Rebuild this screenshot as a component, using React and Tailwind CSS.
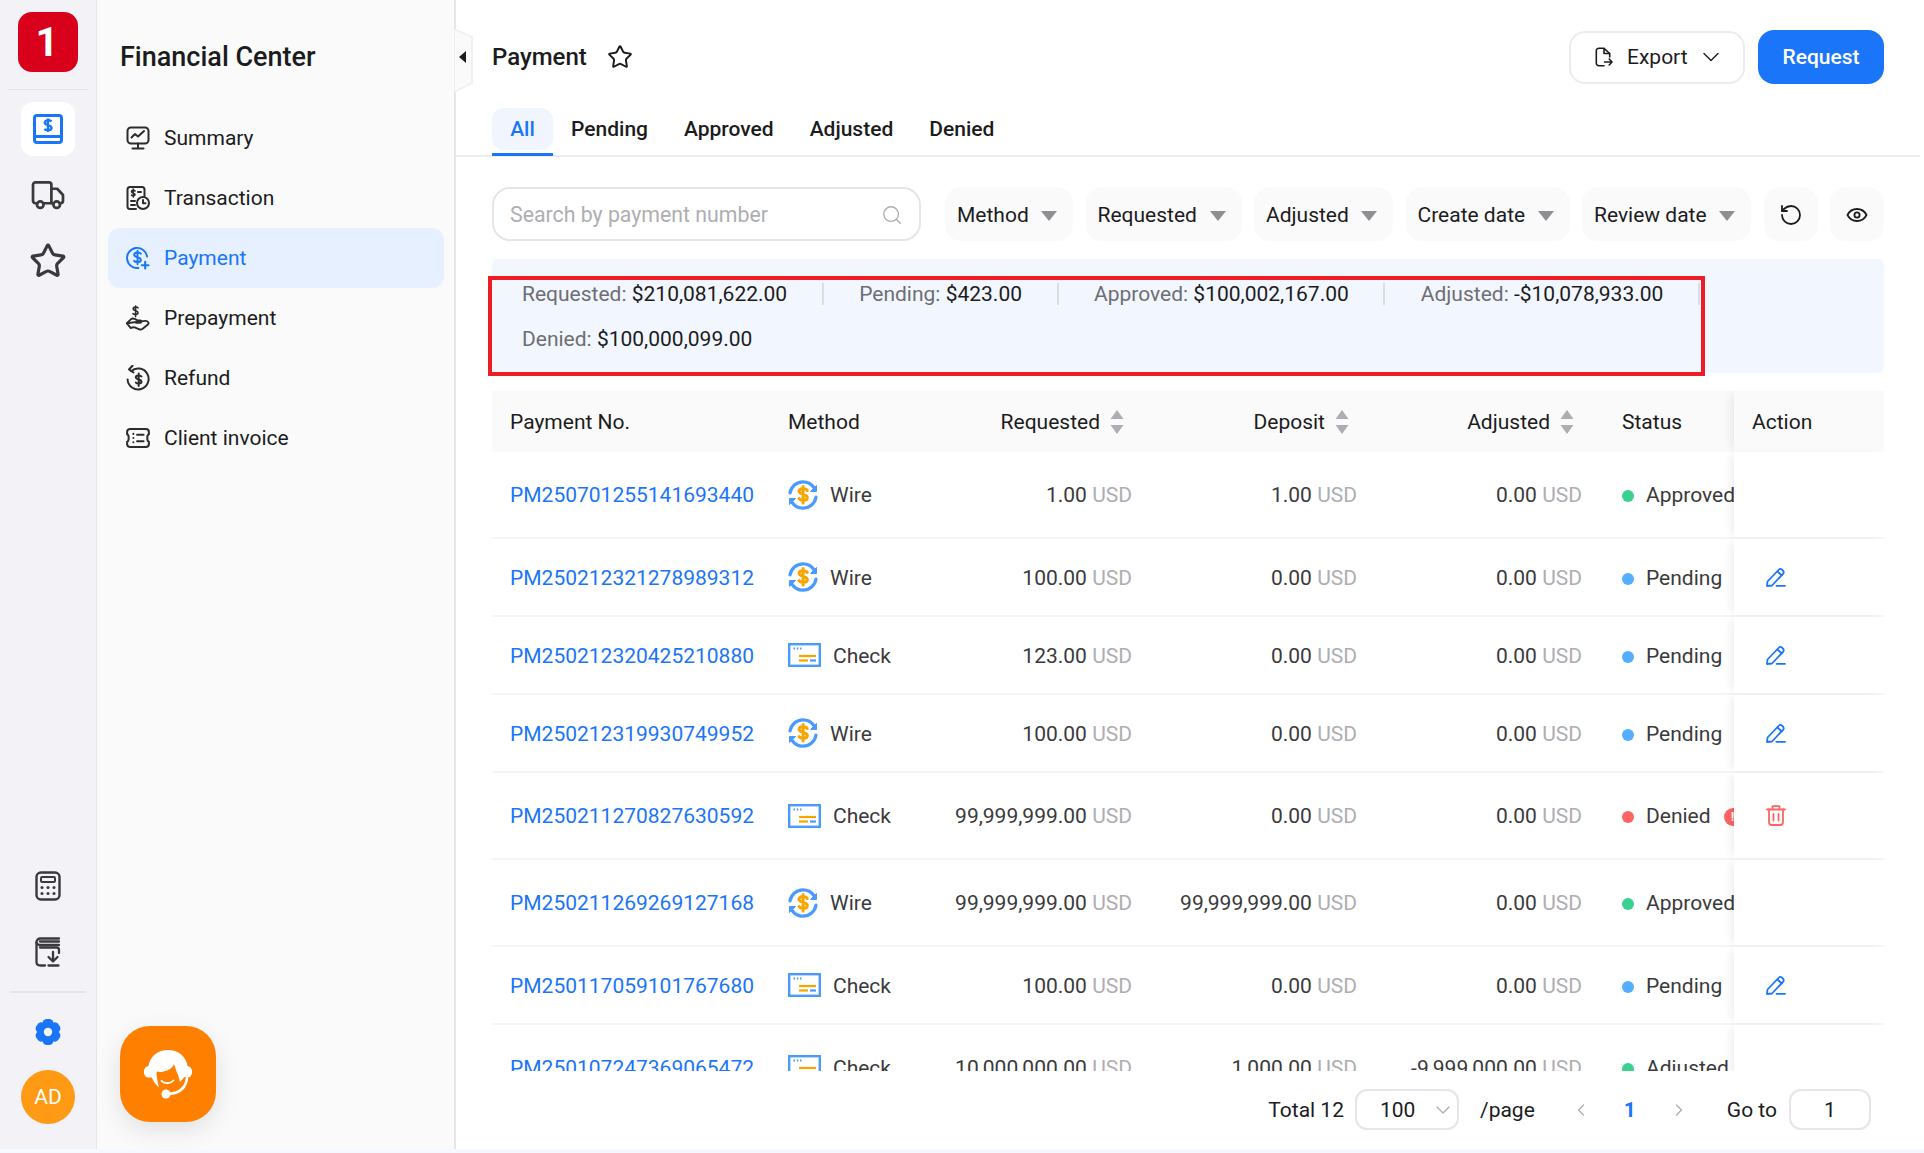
import { ChevronDown, ChevronLeft, ChevronRight, Search, RotateCcw, Star } from "lucide-react";

const rows = [
  { no: "PM250701255141693440", method: "Wire", requested: "1.00", deposit: "1.00", adjusted: "0.00", status: "Approved", action: null, h: "h-[87px]" },
  { no: "PM250212321278989312", method: "Wire", requested: "100.00", deposit: "0.00", adjusted: "0.00", status: "Pending", action: "edit", h: "h-[78px]" },
  { no: "PM250212320425210880", method: "Check", requested: "123.00", deposit: "0.00", adjusted: "0.00", status: "Pending", action: "edit", h: "h-[78px]" },
  { no: "PM250212319930749952", method: "Wire", requested: "100.00", deposit: "0.00", adjusted: "0.00", status: "Pending", action: "edit", h: "h-[78px]" },
  { no: "PM250211270827630592", method: "Check", requested: "99,999,999.00", deposit: "0.00", adjusted: "0.00", status: "Denied", action: "delete", h: "h-[87px]" },
  { no: "PM250211269269127168", method: "Wire", requested: "99,999,999.00", deposit: "99,999,999.00", adjusted: "0.00", status: "Approved", action: null, h: "h-[87px]" },
  { no: "PM250117059101767680", method: "Check", requested: "100.00", deposit: "0.00", adjusted: "0.00", status: "Pending", action: "edit", h: "h-[78px]" },
  { no: "PM250107247369065472", method: "Check", requested: "10,000,000.00", deposit: "1,000.00", adjusted: "-9,999,000.00", status: "Adjusted", action: null, h: "h-[86px]" },
];

const dotColors = {
  Approved: "bg-[#3ad08f]",
  Pending: "bg-[#55aeff]",
  Denied: "bg-[#ff6464]",
  Adjusted: "bg-[#3ad08f]",
};

const totals = [
  ["Requested:", "$210,081,622.00"],
  ["Pending:", "$423.00"],
  ["Approved:", "$100,002,167.00"],
  ["Adjusted:", "-$10,078,933.00"],
  ["Denied:", "$100,000,099.00"],
];

const gridCols = "grid grid-cols-[278px_130px_250px_225px_225px_134px_150px]";

function BookIcon() {
  return (
    <svg width="32" height="32" viewBox="0 0 32 32" fill="none" stroke="#1b75f9" strokeWidth="3" strokeLinejoin="round">
      <rect x="2.5" y="2.5" width="27" height="27" rx="2.5" />
      <path d="M2.5 23.5H29.5" />
      <path d="M19.5 8.5C18.5 7 13 6.5 12.8 9.6C12.6 12.8 19.6 11.6 19.5 15C19.4 18 13.5 17.5 12.5 16M16 5.5V19" strokeWidth="2.4" />
    </svg>
  );
}

function TruckIcon() {
  return (
    <svg width="34" height="29" viewBox="0 0 34 30" fill="none" stroke="#3a3a3c" strokeWidth="2.8" strokeLinejoin="round" strokeLinecap="round">
      <path d="M6 23H4C2.5 23 1.5 22 1.5 20.5V4C1.5 2.5 2.5 1.5 4 1.5H18C19.5 1.5 20.5 2.5 20.5 4V23H12" />
      <path d="M20.5 8H26.5L32.5 14.5V20.5C32.5 22 31.5 23 30 23H29" />
      <circle cx="9" cy="24.5" r="3.4" />
      <circle cx="26" cy="24.5" r="3.4" />
      <path d="M20.5 23H22.5" />
    </svg>
  );
}

function CalculatorIcon() {
  return (
    <svg width="26" height="30" viewBox="0 0 26 30" fill="none" stroke="#3a3a3c" strokeWidth="2.4">
      <rect x="1.5" y="1.5" width="23" height="27" rx="4.5" />
      <rect x="6" y="6" width="14" height="5" rx="1.2" strokeWidth="2" />
      <g fill="#3a3a3c" stroke="none">
        <circle cx="7" cy="16.5" r="1.5" />
        <circle cx="13" cy="16.5" r="1.5" />
        <circle cx="19" cy="16.5" r="1.5" />
        <circle cx="7" cy="22.5" r="1.5" />
        <circle cx="13" cy="22.5" r="1.5" />
        <circle cx="19" cy="22.5" r="1.5" />
      </g>
    </svg>
  );
}

function LedgerIcon() {
  return (
    <svg width="26" height="30" viewBox="0 0 26 30" fill="none" stroke="#3a3a3c" strokeWidth="2.3" strokeLinecap="round" strokeLinejoin="round">
      <path d="M24 1.5H5.5C3 1.5 1.5 3 1.5 5.5V25C1.5 27.5 3 28.5 5.5 28.5H10" />
      <path d="M24 4.5H5M24 8H5.5C3 8 1.5 7 1.5 5.5" />
      <path d="M5 10.5H21.5C23 10.5 24 11.5 24 13V16" />
      <path d="M18 15V24M13.5 20L18 24.5L22.5 20M13.5 28.5H23.5" />
    </svg>
  );
}

function GearIcon() {
  return (
    <svg width="28" height="28" viewBox="0 0 28 28">
      <g fill="#1b75f9">
        <rect x="8.500" y="1" width="11" height="26" rx="4.500" />
        <rect x="8.500" y="1" width="11" height="26" rx="4.500" transform="rotate(60 14 14)" />
        <rect x="8.500" y="1" width="11" height="26" rx="4.500" transform="rotate(120 14 14)" />
        <circle cx="14" cy="14" r="9" />
      </g>
      <circle cx="14" cy="14" r="4.200" fill="#f2f2f7" />
    </svg>
  );
}

function SummaryIcon() {
  return (
    <svg width="24" height="24" viewBox="0 0 24 24" fill="none" stroke="#2c2c2e" strokeWidth="2" strokeLinecap="round" strokeLinejoin="round">
      <rect x="1.500" y="1.500" width="21" height="16" rx="3.500" />
      <path d="M5.500 11.500L9 8L12 10.500L18 5" />
      <path d="M12 17.500V22.500M6.500 22.500H17.500" />
    </svg>
  );
}

function TransactionIcon() {
  return (
    <svg width="24" height="24" viewBox="0 0 24 24" fill="none" stroke="#2c2c2e" strokeWidth="2" strokeLinecap="round" strokeLinejoin="round">
      <path d="M10 23H4C2.500 23 1.500 22 1.500 20.500V3.500C1.500 2 2.500 1 4 1H16C17.500 1 18.500 2 18.500 3.500V10" />
      <path d="M9 5C8.500 4.200 5.500 4 5.500 5.700C5.500 7.500 9 6.700 9 8.500C9 10 6 10 5.500 9.200M7.300 3V11" strokeWidth="1.600" />
      <path d="M5 15H9M5 19H9M12 6H15" />
      <circle cx="17" cy="17" r="6" />
      <path d="M17 14V17.300H19.500" />
    </svg>
  );
}

function PaymentIcon() {
  return (
    <svg width="25" height="24" viewBox="0 0 25 24" fill="none" stroke="#1b75f9" strokeWidth="2" strokeLinecap="round" strokeLinejoin="round">
      <path d="M13 22.400A10.500 10.500 0 1 1 22 10.500" />
      <path d="M15.500 7.500C14.500 5.800 8.500 5.500 8.500 8.700C8.500 12 15.500 10.500 15.500 14C15.500 17 9.500 16.500 8.500 15M12 4.500V18.500" />
      <path d="M20 16V23M16.500 19.500H23.500" strokeWidth="2.200" />
    </svg>
  );
}

function PrepaymentIcon() {
  return (
    <svg width="25" height="26" viewBox="0 0 25 26" fill="none" stroke="#2c2c2e" strokeWidth="2" strokeLinecap="round" strokeLinejoin="round">
      <path d="M12.500 2.500C11.800 1.300 7.500 1 7.500 3.500C7.500 6 12.500 5 12.500 7.500C12.500 10 8 9.500 7.300 8.500M10 .5V11.500" strokeWidth="1.700" />
      <path d="M1 18.500L5 14.500C6 13.500 7.500 13.300 9 14L12 15.500H15C16.500 15.500 16.500 18 15 18H10.500" />
      <path d="M15.500 16.500L20 16C23 15.800 24.500 18.500 22.500 20L17 24.500C16 25.200 15 25.200 14 24.800L9 22.800C8 22.400 7 22.500 6 23L5 23.500L1 18.500Z" />
    </svg>
  );
}

function RefundIcon() {
  return (
    <svg width="24" height="26" viewBox="0 0 24 26" fill="none" stroke="#2c2c2e" strokeWidth="2" strokeLinecap="round" strokeLinejoin="round">
      <path d="M5 6.200A10.500 10.500 0 1 1 1.600 14.500" />
      <path d="M6.500 .8L3 4.500L7.500 7.500" />
      <path d="M15.500 11.500C14.500 10 9.800 9.800 9.800 12.300C9.800 15 15.500 14 15.500 16.800C15.500 19.200 10.800 19 9.800 17.500M12.700 8.500V21" />
    </svg>
  );
}

function InvoiceIcon() {
  return (
    <svg width="26" height="22" viewBox="0 0 26 22" fill="none" stroke="#2c2c2e" strokeWidth="2.200" strokeLinecap="round" strokeLinejoin="round">
      <path d="M4.500 1.200H21.500C23.500 1.200 24.800 2.500 24.800 4.500V7C22.500 7.500 22.500 14.500 24.800 15V17.500C24.800 19.500 23.500 20.800 21.500 20.800H4.500C2.500 20.800 1.200 19.500 1.200 17.500V15C3.500 14.500 3.500 7.500 1.200 7V4.500C1.200 2.500 2.500 1.200 4.500 1.200Z" />
      <path d="M8 6.500V6.600M8 11V11.100M8 15.500V15.600M12 7.500H19M12 14.500H19" />
    </svg>
  );
}

function HeadsetIcon() {
  return (
    <svg width="50" height="50" viewBox="0 0 50 50" fill="none">
      <path
        fill="#fff"
        d="M25 1C14 1 6.500 8.500 5.500 17C2.500 17.500 1 19.500 1 22.500C1 26 2.500 29 6.500 28.500L8.800 28.500C10 32 12.500 35.500 16 38.500C14 30 13 24 14 22.500C20 24 29 21 31 15C33 22 36 27 37 33C38.500 31.500 40 30 41 28L44 28.500C47.500 29 49 26 49 22.500C49 19.500 47.500 17.500 44.500 17C43.500 8.500 36 1 25 1Z"
      />
      <path d="M18.500 32C21.500 35 27.500 35 30.500 31.500" stroke="#fff" strokeWidth="1.800" strokeLinecap="round" />
      <path d="M44 29C43 38 37 44 26 45" stroke="#fff" strokeWidth="2.500" strokeLinecap="round" />
      <circle cx="23" cy="45" r="4.500" fill="#fff" />
    </svg>
  );
}

function ExportIcon() {
  return (
    <svg width="18" height="20" viewBox="0 0 18 20" fill="none" stroke="#1c1c1e" strokeWidth="1.600" strokeLinecap="round" strokeLinejoin="round">
      <path d="M9 18.700H4C2.300 18.700 1.300 17.700 1.300 16V4C1.300 2.300 2.300 1.300 4 1.300H9L14.700 6.500V10" />
      <path d="M9 1.500V6.500H14.500" />
      <path d="M9.500 15H17M14.200 12L17 15L14.200 18" />
    </svg>
  );
}

function EyeIcon() {
  return (
    <svg width="22" height="22" viewBox="0 0 22 22" fill="none" stroke="#1c1c1e" strokeWidth="1.800" strokeLinejoin="round">
      <path d="M1.500 11C3.500 7 7 5 11 5C15 5 18.500 7 20.500 11C18.500 15 15 17 11 17C7 17 3.500 15 1.500 11Z" />
      <circle cx="11" cy="11" r="2.600" />
    </svg>
  );
}

function WireIcon() {
  return (
    <svg width="30" height="30" viewBox="0 0 30 30" fill="none">
      <g stroke="#4b9bff" strokeWidth="3.200" strokeLinecap="round">
        <path d="M2 13C3 6.500 8.500 1.800 15 1.800C19.500 1.800 23.500 4 25.800 7.500" />
        <path d="M28 17C27 23.500 21.500 28.200 15 28.200C10.500 28.200 6.500 26 4.200 22.500" />
      </g>
      <path d="M28.500 5.500V11.500H22.500Z" fill="#4b9bff" stroke="#4b9bff" strokeLinejoin="round" />
      <path d="M1.500 24.500V18.500H7.500Z" fill="#4b9bff" stroke="#4b9bff" strokeLinejoin="round" />
      <path d="M19.300 10.500C18 8 11 7.800 11 11.300C11 15 19.300 13.500 19.300 17.700C19.300 21 12.500 21 11 18.500M15.100 6.500V23" stroke="#f7a600" strokeWidth="3" strokeLinecap="round" />
    </svg>
  );
}

function CheckIcon() {
  return (
    <svg width="33" height="24" viewBox="0 0 33 24" fill="none">
      <rect x="1.200" y="1.200" width="30.600" height="21.600" stroke="#4b9bff" strokeWidth="2.400" />
      <path d="M5.500 5.500H7M8.800 5.500H10.300M12 5.500H13.500" stroke="#4b9bff" strokeWidth="1.800" />
      <path d="M11 13H28" stroke="#f7a600" strokeWidth="2.200" />
      <path d="M11 17.500H20" stroke="#f7a600" strokeWidth="2.200" />
      <path d="M22 17.500H28" stroke="#4b9bff" strokeWidth="2.200" />
    </svg>
  );
}

function SortIcon() {
  return (
    <svg width="14" height="26" viewBox="0 0 14 26" fill="#aeaeb2" className="-mt-[2px] ml-[10px] shrink-0">
      <path d="M7 1L13.500 10H.5Z" />
      <path d="M7 25L.5 16H13.500Z" />
    </svg>
  );
}

function Caret() {
  return (
    <svg width="16" height="10" viewBox="0 0 16 10" fill="#8e8e93">
      <path d="M0 0H16L8 10Z" />
    </svg>
  );
}

function EditIcon() {
  return (
    <svg width="20" height="20" viewBox="0 0 20 20" fill="none" stroke="#1b75f9" strokeWidth="1.800" strokeLinecap="round" strokeLinejoin="round">
      <path d="M1 19L1.500 14.500L13 2.500C14.500 .8 18.500 3.500 17.500 6.300L6 18.500Z" />
      <path d="M11.500 4.500L15.800 8.500" />
      <path d="M10.500 18.800H19" />
    </svg>
  );
}

function TrashIcon() {
  return (
    <svg width="20" height="21" viewBox="0 0 20 21" fill="none" stroke="#ff6464" strokeWidth="1.800" strokeLinecap="round" strokeLinejoin="round">
      <path d="M1 4.500H19M6.500 4.500V1.200H13.500V4.500" />
      <path d="M3 4.500V17C3 18.800 4.200 20 6 20H14C15.800 20 17 18.800 17 17V4.500" />
      <path d="M7.500 9V15.500M12.500 9V15.500" />
    </svg>
  );
}

function RailButton({ children, active }) {
  return (
    <div className={`flex h-[54px] w-[54px] items-center justify-center rounded-[12px] ${active ? "bg-white" : ""}`}>
      {children}
    </div>
  );
}

function MenuItem({ icon, label, active }) {
  return (
    <div className={`ml-[11px] mr-[10px] flex h-[60px] items-center gap-[14px] rounded-[12px] pl-[18px] text-[21px] ${active ? "bg-[#e6f0fe] text-[#1b75f9]" : "text-[#1c1c1e]"}`}>
      <span className="flex w-[24px] justify-center">{icon}</span>
      <span className="pt-[2px]">{label}</span>
    </div>
  );
}

function FilterButton({ label, className }) {
  return (
    <div className={`flex h-[54px] items-center justify-between rounded-[16px] bg-[#fafafa] pl-3 pr-4 pt-[3px] text-[21px] text-[#1c1c1e] ${className}`}>
      {label}
      <Caret />
    </div>
  );
}

function Money({ value }) {
  return (
    <div className="whitespace-nowrap pr-[18px] pt-[3px] text-right text-[#3a3a3c]">
      {value} <span className="text-[#aeaeb2]">USD</span>
    </div>
  );
}

export default function App() {
  return (
    <div className="flex h-[1153px] w-[1924px] flex-col overflow-hidden bg-[#f5f8fe] font-['Roboto',sans-serif]">
      <div className="flex h-[1149px]">
        {/* icon rail */}
        <aside className="flex w-[97px] shrink-0 flex-col items-center border-r border-[#e5e5ea] bg-[#f2f2f7] pb-[25px] pt-3">
          <div className="flex h-[60px] w-[60px] items-center justify-center rounded-[14px] bg-[#d9001b] pr-[2px] pt-[2px] text-[40px] font-bold text-white">1</div>
          <div className="mb-3 mt-[17px] h-[1px] w-[81px] bg-[#e5e5ea]" />
          <div className="flex flex-col gap-3">
            <RailButton active><BookIcon /></RailButton>
            <RailButton><TruckIcon /></RailButton>
            <RailButton><Star size={38} color="#3a3a3c" strokeWidth={2} /></RailButton>
          </div>
          <div className="mt-auto flex flex-col gap-3">
            <RailButton><CalculatorIcon /></RailButton>
            <RailButton><LedgerIcon /></RailButton>
          </div>
          <div className="my-3 h-[2px] w-[74px] bg-[#e5e5ea]" />
          <RailButton><GearIcon /></RailButton>
          <div className="mt-[11px] flex h-[54px] w-[54px] items-center justify-center rounded-full bg-[#ff9a14] pt-[2px] text-[21px] text-white">AD</div>
        </aside>

        {/* section menu */}
        <aside className="relative flex w-[359px] shrink-0 flex-col border-r-2 border-[#e5e5ea] bg-[#fafafa] pb-[27px]">
          <h1 className="mb-[36px] ml-[23px] mt-[41px] pt-[1px] text-[27px] font-medium leading-[30px] text-[#1c1c1e]">Financial Center</h1>
          <MenuItem icon={<SummaryIcon />} label="Summary" />
          <MenuItem icon={<TransactionIcon />} label="Transaction" />
          <MenuItem icon={<PaymentIcon />} label="Payment" active />
          <MenuItem icon={<PrepaymentIcon />} label="Prepayment" />
          <MenuItem icon={<RefundIcon />} label="Refund" />
          <MenuItem icon={<InvoiceIcon />} label="Client invoice" />
          <div className="ml-[23px] mt-auto flex h-[96px] w-[96px] items-center justify-center rounded-[30px] bg-[#ff8000] shadow-[0_8px_24px_rgba(0,0,0,0.1)]">
            <HeadsetIcon />
          </div>
          {/* collapse handle */}
          <svg width="20" height="66" viewBox="0 0 20 66" className="absolute left-[357px] top-[28px]">
            <path d="M0 1L18 9V55L0 64Z" fill="#fafafa" stroke="#eeeef2" strokeWidth="1.500" />
            <path d="M12 23V35L5 29Z" fill="#1c1c1e" />
          </svg>
        </aside>

        {/* main */}
        <main className="flex min-w-0 flex-1 flex-col bg-white">
          <header className="flex items-center justify-between pl-9 pr-10 pt-[30px]">
            <div className="flex items-center gap-[20px]">
              <span className="text-[24px] font-medium text-[#1c1c1e]">Payment</span>
              <Star size={26} color="#1c1c1e" strokeWidth={1.8} />
            </div>
            <div className="flex items-center gap-[13px]">
              <button className="flex h-[53px] w-[176px] items-center gap-[14px] rounded-[16px] border-2 border-[#ececf0] bg-white pl-[24px] text-[21px] text-[#1c1c1e]">
                <ExportIcon />
                <span className="pt-[2px]">Export</span>
                <ChevronDown size={28} strokeWidth={1.2} className="-ml-[5px]" />
              </button>
              <button className="flex h-[54px] w-[126px] items-center justify-center rounded-[16px] bg-[#1b75f9] pt-[2px] text-[21px] font-medium text-white">Request</button>
            </div>
          </header>

          <nav className="mr-1 mt-6 flex h-[49px] items-start gap-[36px] border-b-2 border-[#ececf0] pl-9 text-[21px] font-medium text-[#1c1c1e]">
            <div className="-mr-[18px] flex h-[48px] w-[61px] flex-col">
              <div className="flex h-[42px] items-center justify-center rounded-[12px] bg-[#f0f5fe] pt-[2px] text-[#1b75f9]">All</div>
              <div className="mt-[3px] h-[3px] bg-[#1b75f9]" />
            </div>
            {["Pending", "Approved", "Adjusted", "Denied"].map((tab) => (
              <div key={tab} className="flex h-[42px] items-center pt-[2px]">{tab}</div>
            ))}
          </nav>

          <div className="mt-[30px] flex gap-[12.5px] pl-9">
            <div className="mr-[11.5px] flex h-[54px] w-[429px] items-center justify-between rounded-[18px] border-2 border-[#e5e5ea] pl-4 pr-4 pt-[1px] text-[21.3px] text-[#aeaeb2]">
              Search by payment number
              <Search size={22} color="#aeaeb2" strokeWidth={1.5} />
            </div>
            <FilterButton label="Method" className="w-[128px]" />
            <FilterButton label="Requested" className="w-[156px]" />
            <FilterButton label="Adjusted" className="w-[139px]" />
            <FilterButton label="Create date" className="w-[164px]" />
            <FilterButton label="Review date" className="w-[169px]" />
            <div className="flex h-[54px] w-[54px] items-center justify-center rounded-[16px] bg-[#fafafa] pt-[1px]">
              <RotateCcw size={24} color="#1c1c1e" strokeWidth={1.8} />
            </div>
            <div className="flex h-[54px] w-[54px] items-center justify-center rounded-[16px] bg-[#fafafa] pt-[1px]">
              <EyeIcon />
            </div>
          </div>

          {/* totals */}
          <div className="relative ml-9 mr-10 mt-[18px] h-[114px] rounded-[6px] bg-[#f2f6fe] pl-[30px] pt-6">
            <div className="flex w-[1300px] flex-wrap gap-y-[23px] text-[21px] leading-[22px]">
              {totals.map(([label, value], i) => (
                <div key={label} className={`whitespace-nowrap ${i < 4 ? "mr-[35.5px] border-r-2 border-[#d9dde6] pr-[34.5px]" : ""}`}>
                  <span className="text-[#6e6e73]">{label}</span> <span className="text-[#1c1c1e]">{value}</span>
                </div>
              ))}
            </div>
            {/* red annotation box drawn over the totals */}
            <div className="absolute left-[-4px] top-[17px] h-[100px] w-[1217px] border-4 border-[#ee1c25]" />
          </div>

          {/* table */}
          <div className="ml-9 mr-10 mt-[18px] h-[680px] overflow-hidden text-[21px]">
            <div className={`${gridCols} h-[61px] items-center bg-[#fafafa] text-[#1c1c1e]`}>
              <div className="pl-[18px] pt-[2px]">Payment No.</div>
              <div className="pl-[18px] pt-[2px]">Method</div>
              <div className="flex items-center justify-end pr-[26px] pt-[2px]">Requested<SortIcon /></div>
              <div className="flex items-center justify-end pr-[26px] pt-[2px]">Deposit<SortIcon /></div>
              <div className="flex items-center justify-end pr-[26px] pt-[2px]">Adjusted<SortIcon /></div>
              <div className="pl-[22px] pt-[2px]">Status</div>
              <div className="flex h-full items-center bg-[#fafafa] pl-[18px] pt-[2px] shadow-[-6px_0_8px_-3px_rgba(0,0,0,0.07)]">Action</div>
            </div>
            {rows.map((row) => (
              <div key={row.no} className={`${gridCols} ${row.h} items-center border-b-2 border-[#f5f5f5]`}>
                <div className="pl-[18px] pt-[3px] text-[#1b75f9]">{row.no}</div>
                <div className="flex items-center gap-3 pl-[18px] text-[#3a3a3c]">
                  {row.method === "Wire" ? <WireIcon /> : <CheckIcon />}
                  <span className="pt-[3px]">{row.method}</span>
                </div>
                <Money value={row.requested} />
                <Money value={row.deposit} />
                <Money value={row.adjusted} />
                <div className="flex items-center overflow-hidden whitespace-nowrap pl-[22px] pt-[3px] text-[#3a3a3c]">
                  <span className={`mr-3 h-3 w-3 shrink-0 rounded-full ${dotColors[row.status]}`} />
                  {row.status}
                  {row.status === "Denied" && (
                    <span className="ml-[13px] flex h-[18px] w-[18px] shrink-0 items-center justify-center rounded-full bg-[#ff6464] text-[13px] font-bold text-white">!</span>
                  )}
                </div>
                <div className="flex h-full items-center bg-white pl-[32px] shadow-[-6px_0_8px_-3px_rgba(0,0,0,0.07)]">
                  {row.action === "edit" && <EditIcon />}
                  {row.action === "delete" && <TrashIcon />}
                </div>
              </div>
            ))}
          </div>

          {/* pagination */}
          <div className="mt-[18px] flex items-center justify-end pr-[53px] text-[21px] text-[#1c1c1e]">
            <span className="pt-[3px]">Total 12</span>
            <div className="ml-[11px] flex h-[41px] w-[104px] items-center justify-between rounded-[12px] border-2 border-[#e5e5ea] pl-[23px] pr-[2px]">
              <span className="pt-[3px]">100</span>
              <ChevronDown size={24} color="#aeaeb2" strokeWidth={1.4} />
            </div>
            <span className="ml-[21px] pt-[3px]">/page</span>
            <ChevronLeft size={20} color="#aeaeb2" strokeWidth={1.5} className="ml-[36px]" />
            <span className="ml-[33px] pt-[3px] font-bold text-[#1b75f9]">1</span>
            <ChevronRight size={20} color="#aeaeb2" strokeWidth={1.5} className="ml-[33px]" />
            <span className="ml-[38px] pt-[3px]">Go to</span>
            <div className="ml-3 flex h-[41px] w-[82px] items-center justify-center rounded-[12px] border-2 border-[#e5e5ea] pt-[2px]">1</div>
          </div>
        </main>
      </div>
    </div>
  );
}
